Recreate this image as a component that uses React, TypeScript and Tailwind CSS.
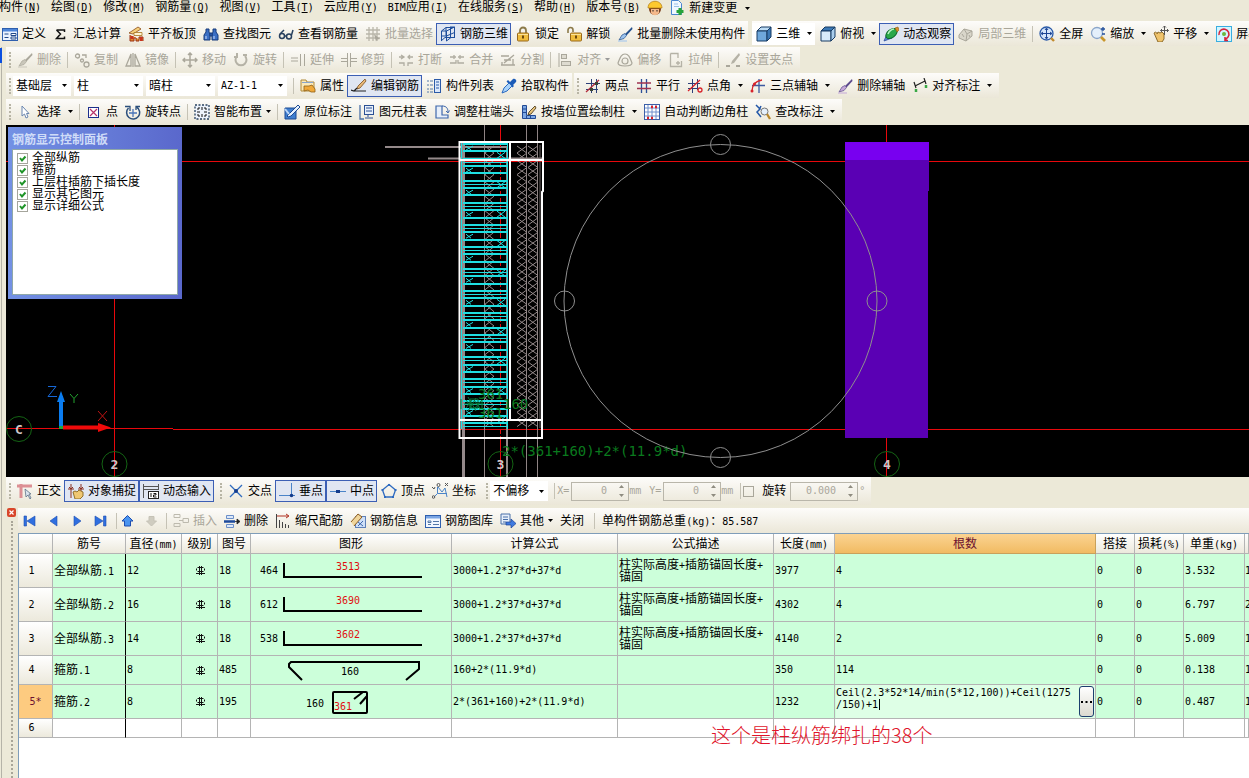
import { Fragment, useState } from "react";
import type { ReactNode } from "react";

const line = (d: string, color = "#27408b", w = 1.3) => (
  <path d={d} stroke={color} strokeWidth={w} fill="none" />
);

const brush = (handle: string, tip: string) => (
  <>
    <path d="M15 1 L8 8 l1.500 1.500 L15.500 3z" fill={handle} />
    <path d="M8 7.500 L5 9 L2 14 L7 12.500 L9.500 9.500z" fill={tip} stroke={handle} strokeWidth=".7" />
    <path d="M1 15h9" stroke={tip} />
  </>
);

const cube = (a: string, b: string, c: string) => (
  <g stroke="#173a63">
    <path d="M1 5 L5 1 H15 L11 5z" fill={a} />
    <path d="M1 5H11V15H1z" fill={b} />
    <path d="M11 5 L15 1 V11 L11 15z" fill={c} />
  </g>
);

const grid = (color: string) => line("M4 1V15M8 1V15M12 1V15M1 4H15M1 8H15M1 12H15", color);

// small 16x16 pictures used by the toolbars
const icons: Record<string, ReactNode> = {
  define: (
    <>
      <rect x=".5" y="2.500" width="15" height="12" fill="#eaf2ff" stroke="#2f5fae" />
      <path d="M1 3h14v2.500H1z" fill="#4f86d9" />
      <path d="M2.500 8h4M2.500 11.500h4M9 7.500h5v2H9zM9 11h5v2H9z" stroke="#234a8a" fill="#fff" />
    </>
  ),
  sum: <path d="M3.500 4H11.500V6M11.500 10.500V12.500H3.500L7.500 8L3.500 4" stroke="#111" strokeWidth="1.500" fill="none" />,
  slab: (
    <>
      <path d="M1 7L10 1L13 3L5 8z" fill="#f6cf7a" stroke="#8a4a16" strokeWidth=".8" />
      <path d="M6 6.500h8v3H6z" fill="#fff3cf" stroke="#a8741c" strokeWidth=".8" />
      <path d="M2 9v6h4v-3h2v3h3v-4h4v4" fill="#e08a2c" stroke="#9c3416" />
      <path d="M2.500 10h3v3h-3zM12 11h2.500v4H12z" fill="#c9331f" />
    </>
  ),
  find: (
    <g fill="#3b6fc4" stroke="#173a7a">
      <path d="M3 3h3v3l1 2v6H1V9l2-3z" />
      <path d="M10 3h3v3l2 3v5H9V8l1-2z" />
      <path d="M7 7h2v3H7z" />
      <path d="M3 10v3M11 10v3" stroke="#cfe0ff" />
    </g>
  ),
  glasses: (
    <g fill="none" stroke="#27405f" strokeWidth="1.500">
      <circle cx="4" cy="10" r="2.500" />
      <circle cx="11" cy="10.500" r="2.500" />
      <path d="M6.500 10h2M2 8L6 4M13.500 9L15 4" />
    </g>
  ),
  batch: (
    <>
      {grid("#b9b6aa")}
      <path d="M9 8l6 5-3 .5-1 2z" fill="#aaa79b" />
    </>
  ),
  frame: line("M1.500 5V15M6.500 5V15M10.500 1V12M14.500 1V12M1.500 5H6.500L14.500 1H10M1.500 10H6.500L14.500 6.500M1.500 5L6 1.500H14M6 1.500V10M1 15L5 11.500H14.500M6.500 15L11 11.500", "#1f4e9c", 1),
  lock: (
    <>
      <path d="M5 7V4.500a3 3 0 0 1 6 0V7" stroke="#8c7a4a" strokeWidth="1.800" fill="none" />
      <rect x="2.500" y="7" width="11" height="8" rx="1" fill="#f0bd3e" stroke="#98681a" />
      <path d="M3 8.500h10" stroke="#fbe39a" />
      <path d="M8 9.500v3" stroke="#5d3b08" strokeWidth="1.800" />
    </>
  ),
  unlock: (
    <>
      <path d="M2 7V4a2.500 2.500 0 0 1 5 0V6" stroke="#8c7a4a" strokeWidth="1.600" fill="none" />
      <rect x="4.500" y="7" width="11" height="8" rx="1" fill="#f0bd3e" stroke="#98681a" />
      <path d="M5 8.500h10" stroke="#fbe39a" />
      <path d="M10 9.500v3" stroke="#5d3b08" strokeWidth="1.800" />
    </>
  ),
  brush: brush("#234f8c", "#9cc3ee"),
  cube: cube("#bcdcf5", "#6fa8dc", "#3c78b4"),
  top: cube("#3c78b4", "#d8ebfa", "#a9cdec"),
  orbit: (
    <>
      <path d="M1 15L4 8l5 4z" fill="#5f88d0" stroke="#2b4f9c" strokeWidth=".8" />
      <ellipse cx="8.500" cy="7.500" rx="6.500" ry="4" transform="rotate(-38 8.500 7.500)" fill="#2ba84a" stroke="#0d6b2a" />
      <path d="M5 8c1-3 4-5 6-5" stroke="#b8f5c2" strokeWidth="1.500" fill="none" />
      <path d="M12 2l3-1 1 3-2 2z" fill="#d9902b" stroke="#8f5a14" strokeWidth=".6" />
    </>
  ),
  part: (
    <g fill="#d9d6ca" stroke="#aaa79b">
      <path d="M1 9L6 3l8 2v5l-6 5-7-3z" />
      <path d="M6 3l3 5M9 8l5-3M9 8l-1 7M4 8l2 3M11 9l1 2" />
    </g>
  ),
  full: (
    <>
      <circle cx="7.500" cy="7.500" r="6.500" fill="#d7e7fb" stroke="#2b5aa8" strokeWidth="1.300" />
      <path d="M7.500 2.500v10M2.500 7.500h10M6 4l1.500-2L9 4M6 11l1.500 2L9 11M4 6L2 7.500L4 9M11 6l2 1.500L11 9" stroke="#1c4494" fill="none" />
      <path d="M12 12l3 3" stroke="#c28a2b" strokeWidth="2.400" />
    </>
  ),
  zoom: (
    <>
      <circle cx="7" cy="7" r="5.500" fill="#e4effb" stroke="#8aa5c9" strokeWidth="1.300" />
      <path d="M11 11l4 4" stroke="#c9962b" strokeWidth="2.600" />
      <path d="M11 3h4M13 1v4M12 8h3" stroke="#234f9c" strokeWidth="1.300" />
    </>
  ),
  pan: (
    <>
      <path d="M1 7c2-2 3 0 3 1l1-2 2 1 2-1 2 2v5l-2 3H5z" fill="#efc36b" stroke="#8c6a2a" />
      <path d="M11.500 0v9M7.500 4.500h8M10 1.500L11.500 0L13 1.500M14 3l1.500 1.500L14 6M9 3L7.500 4.500L9 6" stroke="#555" fill="none" />
    </>
  ),
  screen: (
    <>
      <rect x=".5" y=".5" width="15" height="15" fill="#d2f5ff" stroke="#39aee0" />
      <path d="M3 9a5 5 0 1 1 9 2l-3 3M9 11v3.500h3" stroke="#d8233a" strokeWidth="1.600" fill="none" />
      <circle cx="8" cy="8" r="2" fill="#69b83c" />
    </>
  ),
  eraseG: brush("#aaa79b", "#c9c6ba"),
  copyG: (
    <g fill="none" stroke="#aaa79b" strokeWidth="1.300">
      <circle cx="3.500" cy="4" r="2" />
      <path d="M8 3h4v3" />
      <circle cx="12.500" cy="12.500" r="2.500" />
      <circle cx="8" cy="8.500" r="1.500" />
    </g>
  ),
  mirrorG: line("M6 2V14H1zM10 2V14H15zM8 1V15", "#aaa79b"),
  moveG: line("M8 1V15M1 8H15M6 3L8 1L10 3M6 13L8 15L10 13M3 6L1 8L3 10M13 6L15 8L13 10", "#aaa79b", 1.5),
  rotateG: line("M4 4a5.500 5.500 0 1 0 8 0M4 1v4H1M10 3h4", "#b5b2a6", 2),
  extendG: line("M1 6H8M1 9H8M10.500 2V14M14.500 2V14", "#aaa79b", 1),
  trimG: line("M0 6.500H6M10 6.500H16M0 9.500H6M10 9.500H16M6.500 1V15M9.500 1V15", "#aaa79b", 1),
  breakG: line("M1 5H6M10 5H15M1 11H6V14M10 14V11H15M3 3L6 5L3 7M12 3L10 5L12 7", "#b0ada1"),
  joinG: line("M1 5H7M9 5H15M1 11H7V8M9 8V11H15M5 3V7M11 3V7", "#b0ada1"),
  splitG: line("M1 4H9M1 13H15M2 10V13M13 7V13M4 11L14 3M4 8H11", "#aaa79b"),
  alignG: (
    <g fill="#dedbd0" stroke="#aaa79b">
      <path d="M2 1v14" />
      <rect x="4.500" y="2.500" width="5" height="4" />
      <rect x="4.500" y="9.500" width="9" height="4" />
    </g>
  ),
  offsetG: (
    <g fill="none" stroke="#aaa79b" strokeWidth="1.200">
      <path d="M8 2c4 0 5 4 7 9 0 2-3 3-7 3s-7-1-7-3c2-5 3-9 7-9z" />
      <circle cx="8" cy="9" r="3" />
    </g>
  ),
  stretchG: line("M2.500 1.500H10V6M2.500 1.500V14.500H13.500V9M8 11H12M10 9V13", "#b5b2a6"),
  gripG: (
    <>
      <path d="M14 1L7 9l-1 3 3-1 6-8z" fill="#b5b2a6" />
      <path d="M1 14h4M11 14h4" stroke="#aaa79b" strokeWidth="2" />
    </>
  ),
  props: (
    <>
      <path d="M1 2h5l1 2h7v9H1z" fill="#fbe9b8" stroke="#b08a3a" />
      <path d="M2 4.500h11" stroke="#8aa5c9" />
      <path d="M4 8h5l3-1 3 4v3h-4l-3-2-4 1z" fill="#f0a93a" stroke="#8f5f14" strokeWidth=".8" />
    </>
  ),
  pen: (
    <>
      <path d="M14 1L7 8l-1 3 3-1 6-7z" fill="#e8b878" stroke="#7b4f1e" strokeWidth=".8" />
      <path d="M0 12l3 1 3-3M3 13h12" stroke="#222" strokeWidth="1.200" fill="none" />
    </>
  ),
  list: (
    <>
      <path d="M1 3h2M4 3h3M1 7h2M4 7h3M1 11h2M4 11h3M1 14h2M4 14h3" stroke="#5578a8" />
      <rect x="8.500" y="1.500" width="6" height="13" fill="#dbe8fa" stroke="#2b5aa8" />
      <path d="M10 4h3M10 7h3M10 10h3" stroke="#2b5aa8" />
    </>
  ),
  pick: (
    <>
      <path d="M9 4L12 1c2-1 4 1 3 3l-3 3 1 1-1.500 1.500-6-6L7 2z" fill="#1c5cb8" />
      <path d="M8 5L3 10l-2 5 5-2 5-5z" fill="#a8d2fa" stroke="#2b6ac0" />
    </>
  ),
  twoPts: (
    <>
      {line("M6.500 1V15M11.500 1V15M1 5.500H15M1 11.500H13", "#2c3f78", 1)}
      <path d="M1 14L14 2" stroke="#b02b3a" strokeWidth="1.300" />
      <path d="M5 10h3v3H5zM10 4h3v3h-3z" fill="#3c4434" />
    </>
  ),
  parallel: (
    <>
      {line("M5.500 1V15M10.500 1V15", "#2c4f98")}
      {line("M1 5H15M1 10.500H15", "#a03350")}
    </>
  ),
  ptAngle: (
    <>
      {line("M5.500 1V15M10.500 1V12M1 5.500H13M1 10.500H10", "#2c3f78", 1)}
      <path d="M1 13L13 2" stroke="#d8232a" strokeWidth="1.300" />
      <circle cx="13" cy="12" r="2" fill="none" stroke="#d8232a" strokeWidth="1.300" />
    </>
  ),
  threePts: (
    <>
      {line("M9 1V15M2 7.500H15", "#3c5aa0")}
      <path d="M2 13c0-7 4-10 10-11" stroke="#d8232a" fill="none" strokeWidth="1.300" />
      <circle cx="2" cy="13" r="1.500" fill="#d8232a" />
      <circle cx="4.500" cy="6" r="1.500" fill="#d8232a" />
    </>
  ),
  delAxis: brush("#5c4a8c", "#c5a8d8"),
  dim: (
    <>
      <path d="M3 8L13 3M2 4l2 6M12 0l2 6" stroke="#222" strokeWidth="1.200" />
      <path d="M4 11v3M14 7v3" stroke="#39a845" strokeWidth="2.500" />
    </>
  ),
  cursor: <path d="M5 2V12L7.500 10L9 14L11 13L9.500 9.500H12z" fill="#fff" stroke="#6a86b0" />,
  point: (
    <>
      <rect x="2.500" y="3.500" width="10" height="10" fill="#fff" stroke="#1c2f8c" />
      <path d="M4 5l7 7M11 5l-7 7" stroke="#b8336a" strokeWidth="1.200" />
    </>
  ),
  rotPoint: (
    <>
      <path d="M3.500 4a6.500 6.500 0 1 0 8-1" stroke="#2b4f7c" strokeWidth="1.500" fill="none" />
      <path d="M0 2.500h5V7M11 6V2.500h4" stroke="#2b4f7c" strokeWidth="1.300" fill="none" />
      <path d="M8 5v8M4 9h8" stroke="#4a74b8" strokeWidth="1.300" />
    </>
  ),
  smart: (
    <>
      <rect x="1" y="1" width="14" height="14" fill="#edf3fc" stroke="#27405f" strokeDasharray="2 1.500" strokeWidth="1.300" />
      <path d="M4 6V4h2M10 4h2v2M12 10v2h-2M6 12H4v-2M8 3v3M8 10v3M3 8h3M10 8h3" stroke="#111" fill="none" />
    </>
  ),
  note: (
    <>
      <path d="M1 4h11v11H1z" fill="#3f7fd0" stroke="#1c4a94" />
      <path d="M3 12L14 1l2 2-9 9-3 1z" fill="#e4f0ff" stroke="#1c4a94" />
      <path d="M1 5l4 5" stroke="#bcd6f8" strokeWidth="2" />
    </>
  ),
  colTable: (
    <>
      <path d="M1 1v14h4" stroke="#4a70a8" fill="none" strokeWidth="1.300" />
      <rect x="5.500" y="1.500" width="9" height="9" fill="#e7effa" stroke="#2b4f94" />
      <path d="M7 4h6M7 7h6M9 11v2M6 14h8" stroke="#2b4f94" />
    </>
  ),
  adjust: (
    <>
      <path d="M2 2h6v9h6v3H2z" fill="#e7effa" stroke="#3f68ac" strokeWidth="1.200" />
      <path d="M8 2c5 0 6 3 6 6M12 7l2 2 1.500-2.500" stroke="#3f68ac" fill="none" />
    </>
  ),
  wallDraw: (
    <>
      <path d="M1.500 1.500h4v10h9v3h-13z" fill="#7da8e4" stroke="#234a94" />
      <path d="M2 5h3M2 8.500h3M5.500 12v2M9.500 12v2" stroke="#234a94" />
      <path d="M14 2L8 8l-1 3 3-1 5-6z" fill="#e8c47a" stroke="#3d2d12" strokeWidth=".8" />
    </>
  ),
  auto: (
    <>
      <rect x=".5" y=".5" width="15" height="15" fill="#fff" stroke="#3b5fa8" />
      {line("M4 1V15M8 1V15M12 1V15M1 4H15M1 8H15M1 12H15", "#6f90cc", 1)}
      <path d="M7 3h2M11 3h2M3 14h2M7 14h2" stroke="#d8232a" strokeWidth="2.500" />
    </>
  ),
  check: (
    <>
      <path d="M1 1l4 4-3 3 4 5M6 2L4 6" stroke="#2357a8" strokeWidth="1.500" fill="none" />
      <circle cx="9.500" cy="7.500" r="3.500" fill="#e4effb" stroke="#777" />
      <path d="M12 10l3 5" stroke="#b8862b" strokeWidth="2.300" />
    </>
  ),
  ortho: (
    <>
      <path d="M0 3h15M4 1v14" stroke="#dc8f94" strokeWidth="3" />
      <path d="M8 6l1 8 2-2 2 4 1-1-2-4h2z" fill="#dbe4ee" stroke="#5d7186" strokeWidth=".8" />
    </>
  ),
  snap: (
    <>
      <path d="M0 6h6M10 6h6M3 1v14M13 1v8M1 4l2 2 2-2M11 4l2 2 2-2" stroke="#8c3020" fill="none" />
      <path d="M5 9l2-1 2 1 2-2 4 2v4l-3 3H7z" fill="#f0c872" stroke="#91702c" />
    </>
  ),
  dyn: (
    <>
      <path d="M.5 1v14M15.500 1v6M1 3.500h14M1 6.500h14" stroke="#555" />
      <rect x="5.500" y="8.500" width="10" height="7" fill="#fff" stroke="#222" />
      <path d="M8 10v4M10.500 10.500h2.500v1.500h-2.500v2h3" stroke="#111" fill="none" />
    </>
  ),
  cross: (
    <>
      {line("M2 2L14 14M14 2L2 14", "#2f6bc0")}
      <circle cx="8" cy="8" r="2" fill="#143c8c" />
    </>
  ),
  perp: (
    <>
      {line("M12.500 0V12M0 12.500H16", "#4a84c8", 1)}
      <circle cx="12.500" cy="12.500" r="1.800" fill="#143c8c" />
    </>
  ),
  mid: (
    <>
      {line("M0 8.500H16", "#4a84c8", 1)}
      <path d="M6 7h4v3H6z" fill="#143c8c" />
    </>
  ),
  vertex: (
    <>
      {line("M8 1.500L14.500 7L12 14H4L1.500 7z", "#2f6bc0")}
      <path d="M7 1h2v2H7zM13.500 6h2v2h-2zM.5 6h2v2h-2zM3 13h2v2H3zM11 13h2v2h-2z" fill="#2f6bc0" />
    </>
  ),
  coord: (
    <>
      {line("M5.500 4V10.500H15M5.500 10.500L2 14M6 4L10 9L13 5L15 14", "#4a84c8", 1)}
      <path d="M0 4l2 2 1-2M13 0l3 3M16 0l-3 3" stroke="#555" fill="none" />
      <circle cx="6.500" cy="2" r="1.500" fill="none" stroke="#555" />
      <circle cx="1.500" cy="14" r="1.300" fill="none" stroke="#555" />
    </>
  ),
  insG: line("M1 1.500H7V4.500H1zM1 10.500H7V13.500H1zM6 7.500H10M10 5.500H15.500V9.500H10z", "#bdbaae", 1),
  rowDel: (
    <>
      <path d="M2.500 2.500h7v3h-7zM2.500 11.500h7v3h-7z" fill="#dce8fa" stroke="#6b8fc8" />
      <path d="M0 8.500h11" stroke="#1c4a9c" strokeWidth="2.500" />
      <path d="M11 8.500h2M13 6l3 2.500-3 2.500z" stroke="#222" strokeWidth=".8" fill="#222" />
    </>
  ),
  scale: (
    <>
      <path d="M2 3h11M11 1l3 2-3 2" stroke="#b03020" fill="none" />
      <path d="M1.500 1v14M4.500 7v8M7.500 9v6M10.500 11v4M13.500 12v3" stroke="#444" />
    </>
  ),
  info: (
    <>
      <rect x="5.500" y="3.500" width="10" height="11" fill="#cfe0f8" stroke="#5f80b8" />
      <path d="M1 9L8 1l4 3-8 9" fill="#f0d59a" stroke="#8a5a20" />
      <path d="M8 9l5 4M13 8l-5 5" stroke="#3f68ac" />
    </>
  ),
  lib: (
    <>
      <rect x=".5" y="2.500" width="15" height="12" fill="#f2f7ff" stroke="#2f5fae" />
      <path d="M1 3h14v2.500H1z" fill="#7aa5e4" />
      <path d="M3 8h3v1.500H3zM3 11.500h3M8 8.500h6M8 11.500h6" stroke="#5578a8" fill="none" />
    </>
  ),
  other: (
    <>
      <path d="M1 1h9v10H1zM3 4h5M3 6.500h5M3 9h3" fill="#e7effa" stroke="#4a70a8" />
      <path d="M6 9h5V6l5 4.500-5 4.500v-3H6z" fill="#3f7ae0" stroke="#1c4494" strokeWidth=".7" />
    </>
  ),
  first: <path d="M3 3h2.500v10H3zM14 3v10L6 8z" fill="#2f6fe0" stroke="#1c4db0" strokeWidth=".6" />,
  prev: <path d="M12 3v10L5 8z" fill="#2f6fe0" stroke="#1c4db0" strokeWidth=".6" />,
  next: <path d="M5 3v10L12 8z" fill="#2f6fe0" stroke="#1c4db0" strokeWidth=".6" />,
  last: <path d="M10.500 3H13v10h-2.500zM2 3v10l8-5z" fill="#2f6fe0" stroke="#1c4db0" strokeWidth=".6" />,
  up: <path d="M8.500 2.500L14 8H11.500v5h-6V8H3z" fill="#4a94f0" stroke="#1c4db0" />,
  down: <path d="M8.500 13L3.500 8H6V3.500h5V8h2.500z" fill="#cfccc0" stroke="#c5c2b6" />,
  worker: (
    <>
      <circle cx="8" cy="9" r="6" fill="#7a3f1c" />
      <path d="M4 9h8v4c-2 3-6 3-8 0z" fill="#f4b98a" />
      <path d="M1 8c0-9 14-9 14 0z" fill="#fdc92e" stroke="#b07a12" strokeWidth=".7" />
      <path d="M6 10v1.500M10 10v1.500" stroke="#222" />
    </>
  ),
  newDoc: (
    <>
      <path d="M2.500.5h7l3 3v11h-10z" fill="#f0f7ff" stroke="#4a86d0" />
      <path d="M5 4h4M5 6.500h5" stroke="#9cc0e8" />
      <path d="M11 8v7M7.500 11.500h7" stroke="#27a33a" strokeWidth="3" />
    </>
  ),
};

function Icon({ name }: { name: string }) {
  return (
    <svg viewBox="0 0 16 16" className="size-4 shrink-0" aria-hidden="true">
      {icons[name]}
    </svg>
  );
}

// Latin runs are half as wide as the Chinese characters beside them
function Mixed({ text }: { text: string }) {
  return (
    <>
      {text.split(/([\x20-\x7e]+)/).map((part, i) =>
        i % 2 ? (
          <span key={i} className="text-[10px] leading-none">{part}</span>
        ) : (
          <Fragment key={i}>{part}</Fragment>
        )
      )}
    </>
  );
}

function Arrow({ muted = false }: { muted?: boolean }) {
  return (
    <svg viewBox="0 0 5 3" className="h-[3px] w-[5px] shrink-0" aria-hidden="true">
      <path d="M0 0H5L2.500 3z" fill={muted ? "#999" : "#000"} />
    </svg>
  );
}

const Sep = () => <span className="ml-[3px] mr-[2px] h-4 w-px shrink-0 bg-[#c5c2b5]" />;
const Grip = () => <span className="ml-[3px] mr-[2px] h-4 w-[2px] shrink-0 border-l-2 border-dotted border-[#b8b5a5]" />;

type ToolProps = { icon?: string; label: string; on?: boolean; off?: boolean; menu?: boolean; tight?: boolean };

function Tool({ icon, label, on, off, menu, tight }: ToolProps) {
  return (
    <button
      type="button"
      disabled={off}
      aria-pressed={on}
      className={`flex h-[22px] shrink-0 items-center gap-1 border pl-[3px] pr-[2px] ${
        on ? "border-[#3c5fb4] bg-[#e0e6f2]" : "border-transparent hover:border-[#9db2d8]"
      } ${off ? "text-[#a9a69a]" : "text-black"}`}
    >
      {icon && <Icon name={icon} />}
      <span>{label}</span>
      {menu && (
        <span className={tight ? "flex" : "flex w-2 justify-end"}>
          <Arrow muted={off} />
        </span>
      )}
    </button>
  );
}

function Bar({ children, className = "" }: { children: ReactNode; className?: string }) {
  return (
    <div className={`flex h-[25px] shrink-0 items-center bg-linear-to-b from-[#fdfcfa] to-[#ebe7d8] ${className}`}>
      {children}
    </div>
  );
}

function Combo({ label, options, width }: { label: string; options: string[]; width: string }) {
  return (
    <span className={`relative mr-[3px] flex h-5 shrink-0 items-center bg-white ${width}`}>
      <select aria-label={label} className="w-full appearance-none bg-transparent pl-[3px] outline-none">
        {options.map((o) => (
          <option key={o}>{o}</option>
        ))}
      </select>
      <span className="pointer-events-none absolute right-1 flex">
        <Arrow />
      </span>
    </span>
  );
}

function Spin({ label, value, width }: { label: string; value: string; width: string }) {
  return (
    <span className={`flex h-[19px] shrink-0 items-center border border-[#b9b6aa] pr-1 ${width}`}>
      <input aria-label={label} defaultValue={value} disabled className="min-w-0 flex-1 pr-3 text-right text-[10px] text-[#a9a69a]" />
      <svg viewBox="0 0 5 12" className="h-3 w-[5px] shrink-0" aria-hidden="true">
        <path d="M0 3L2.500 0L5 3zM0 9H5L2.500 12z" fill="#8f8c80" />
      </svg>
    </span>
  );
}

const menus = [
  ["构件", "N"], ["绘图", "D"], ["修改", "M"], ["钢筋量", "Q"], ["视图", "V"], ["工具", "T"],
  ["云应用", "Y"], ["BIM应用", "I"], ["在线服务", "S"], ["帮助", "H"], ["版本号", "B"],
];

function MenuBar() {
  return (
    <nav className="-ml-px flex h-5 items-start gap-[10px] overflow-hidden leading-[14px]">
      {menus.map(([name, key]) => (
        <button key={key} type="button" className="shrink-0">
          <Mixed text={name} />
          <span className="text-[10px]">
            (<u>{key}</u>)
          </span>
        </button>
      ))}
      <span className="-ml-[3px] flex shrink-0">
        <Icon name="worker" />
      </span>
      <button type="button" className="-ml-1 flex shrink-0 items-center gap-1">
        <Icon name="newDoc" />
        新建变更
        <span className="ml-1">
          <Arrow />
        </span>
      </button>
    </nav>
  );
}

function Toolbars() {
  return (
    <div className="flex flex-col items-start gap-px pb-px">
      <div className="flex w-full overflow-hidden">
        <Bar className="-ml-[2px]">
          <Tool icon="define" label="定义" />
          <Tool icon="sum" label="汇总计算" />
          <Tool icon="slab" label="平齐板顶" />
          <Tool icon="find" label="查找图元" />
          <Tool icon="glasses" label="查看钢筋量" />
          <Tool icon="batch" label="批量选择" off />
          <Tool icon="frame" label="钢筋三维" on />
          <Tool icon="lock" label="锁定" />
          <Tool icon="unlock" label="解锁" />
          <Tool icon="brush" label="批量删除未使用构件" />
        </Bar>
        <Bar className="ml-1 flex-1">
          <span className="mr-px flex shrink-0 bg-white">
            <Tool icon="cube" label="三维" menu />
          </span>
          <Tool icon="top" label="俯视" menu />
          <Tool icon="orbit" label="动态观察" on />
          <Tool icon="part" label="局部三维" off />
          <Sep />
          <Tool icon="full" label="全屏" />
          <Tool icon="zoom" label="缩放" menu />
          <Tool icon="pan" label="平移" menu />
          <Tool icon="screen" label="屏幕旋转" />
        </Bar>
      </div>
      <Bar className="ml-[6px] pr-1">
        <Grip />
        <Tool icon="eraseG" label="删除" off />
        <Sep />
        <Tool icon="copyG" label="复制" off />
        <Tool icon="mirrorG" label="镜像" off />
        <Sep />
        <Tool icon="moveG" label="移动" off />
        <Tool icon="rotateG" label="旋转" off />
        <Sep />
        <Tool icon="extendG" label="延伸" off />
        <Tool icon="trimG" label="修剪" off />
        <Sep />
        <Tool icon="breakG" label="打断" off />
        <Tool icon="joinG" label="合并" off />
        <Tool icon="splitG" label="分割" off />
        <Sep />
        <Tool icon="alignG" label="对齐" off menu tight />
        <Tool icon="offsetG" label="偏移" off />
        <Tool icon="stretchG" label="拉伸" off />
        <Sep />
        <Tool icon="gripG" label="设置夹点" off />
      </Bar>
      <div className="ml-[6px] flex">
        <Bar>
          <Grip />
          <Combo label="楼层" options={["基础层", "首层"]} width="w-[58px]" />
          <Combo label="构件类型" options={["柱", "梁"]} width="w-[69px]" />
          <Combo label="柱类型" options={["暗柱", "框柱"]} width="w-[69px]" />
          <span className="text-[10px]">
            <Combo label="构件名称" options={["AZ-1-1"]} width="w-[69px]" />
          </span>
          <Sep />
          <Tool icon="props" label="属性" />
          <Tool icon="pen" label="编辑钢筋" on />
          <Tool icon="list" label="构件列表" />
          <Tool icon="pick" label="拾取构件" />
        </Bar>
        <Bar className="ml-[2px] pr-1">
          <Grip />
          <Tool icon="twoPts" label="两点" />
          <Tool icon="parallel" label="平行" />
          <Tool icon="ptAngle" label="点角" menu />
          <Tool icon="threePts" label="三点辅轴" menu />
          <Tool icon="delAxis" label="删除辅轴" />
          <Tool icon="dim" label="对齐标注" menu />
        </Bar>
      </div>
      <Bar className="ml-[6px] pr-1">
        <Grip />
        <Tool icon="cursor" label="选择" menu />
        <Sep />
        <Tool icon="point" label="点" />
        <Tool icon="rotPoint" label="旋转点" />
        <Sep />
        <Tool icon="smart" label="智能布置" menu tight />
        <Sep />
        <Tool icon="note" label="原位标注" />
        <Tool icon="colTable" label="图元柱表" />
        <Tool icon="adjust" label="调整柱端头" />
        <Tool icon="wallDraw" label="按墙位置绘制柱" menu />
        <Tool icon="auto" label="自动判断边角柱" />
        <Tool icon="check" label="查改标注" menu />
      </Bar>
    </div>
  );
}

// stirrups and tie hatching of the column in the 3D view
const stirrups = Array.from({ length: 39 }, (_, i) => 144 + i * 7.35);
const ties = Array.from({ length: 39 }, (_, i) => 146 + i * 7.2);

function Bubble({ x, y, text }: { x: number; y: number; text: string }) {
  return (
    <g>
      <circle cx={x} cy={y} r="12.5" fill="none" stroke="#146414" />
      <text x={x} y={y + 5} textAnchor="middle" fontSize="13" fontWeight="bold" fill="#cfc5c8">{text}</text>
    </g>
  );
}

function ModelView() {
  return (
    <svg className="block h-[352px] w-full bg-black" role="img" aria-label="钢筋三维">
      <g fill="#e8080c">
        <rect x="0" y="36" width="100%" height="1" />
        <rect x="0" y="303" width="167" height="1" />
        <rect x="167" y="304" width="100%" height="1" />
        <rect x="108" y="0" width="1" height="100%" />
        <rect x="494" y="0" width="1" height="100%" />
        <rect x="880" y="0" width="1" height="100%" />
      </g>
      <g transform="translate(-6 -125)" fill="none">
        <path d="M460 142H543V438H460z" fill="#000" />
        <path d="M460 161.500H543M460 429.500H543" stroke="#e8080c" />
        <path d="M484.500 125V477M526.500 125V477M537.500 125V477" stroke="#8f8484" />
        <path d="M463.500 142V477" stroke="#94898a" strokeWidth="3" />
        <path d="M507 146V477" stroke="#94898a" strokeWidth="2" />
        <path d="M385 147H507M428 158.500H543" stroke="#94898a" strokeWidth="2" />
        <path d="M540 145V428" stroke="#6d6464" />
        {ties.map((y) => (
          <path
            key={y}
            d={`M517 ${y}l10 7.200M517 ${y + 7}l10 -7.200M528 ${y}l10 7.200M528 ${y + 7}l10 -7.200M485 ${y}l9 7.200M485 ${y + 7}l9 -7.200`}
            stroke="#94898a"
          />
        ))}
        <path d="M500.500 142V438" stroke="#e8080c" strokeDasharray="5 2" />
        {stirrups.map((y, i) => (
          <g key={y} stroke="#1fdfe2">
            <path d={`M463 ${Math.round(y)}H508`} strokeWidth={2} />
            {i % 3 === 2 && <path d={`M463 ${Math.round(y) + 3.5}H508`} />}
            {i % 3 === 0 && <path d={`M466 ${y + 6}l7 -4M466 ${y + 2}l5 4`} />}
            {i % 4 === 1 && <path d={`M497 ${y + 1}l8 6M497 ${y + 7}l8 -6`} />}
          </g>
        ))}
        <path d="M461.500 143V429M507.500 143V429" stroke="#1fdfe2" />
        <path d="M459.500 142H543V191L542 192V438H459.500zM510 142V420M459 160H543M459 420H543" stroke="#fff" strokeWidth="2" />

        <path
          d="M461 399v10M466 400l6 8M466 408l6-8M470 399h8v9h-8zM474 400l6 8M474 409l8-9M464 404h20M468 397l8 14M476 398l-8 13M482 400v9"
          stroke="#0a7a3a"
        />
        <g fill="#0a7a1e" fontSize="14">
          <text x="478" y="399">361</text>
          <text x="478" y="418">361</text>
          <text x="503" y="409">160</text>
          <text x="502" y="456">2*(361+160)+2*(11.9*d)</text>
        </g>

        <path d="M845 142H929V191H928V438H845z" fill="#5a00b4" />
        <path d="M845 142H929V160H845z" fill="#7800f0" />
        <g stroke="#8f8f8f">
          <circle cx="720.500" cy="301" r="156.500" />
          <circle cx="720.500" cy="144.500" r="10" />
          <circle cx="720.500" cy="457.500" r="10" />
          <circle cx="564.500" cy="301" r="10" />
          <circle cx="877" cy="301" r="10" />
        </g>

        <Bubble x={19} y={429} text="C" />
        <Bubble x={114.5} y={464} text="2" />
        <Bubble x={500.5} y={464} text="3" />
        <Bubble x={887} y={464} text="4" />

        <path d="M61 427V396" stroke="#0a7cf0" strokeWidth="4" />
        <path d="M61 391L65 402H57z" fill="#0a7cf0" />
        <path d="M63 427.500H100" stroke="#f00a0a" strokeWidth="4" />
        <path d="M98 423L111 427.500L98 432z" fill="#f00a0a" />
        <path d="M59 426h4v3h-4z" fill="#1fa83a" />
        <path d="M48 386.500H56L48 396.500H57" stroke="#1668d8" />
        <path d="M70 394L74 398.500L78 394M74 398.500V403" stroke="#23a32f" />
        <path d="M98 411L107 421M107 411L98 421" stroke="#c01414" />
      </g>
    </svg>
  );
}

const displayOptions = ["全部纵筋", "箍筋", "上层柱插筋下插长度", "显示其它图元", "显示详细公式"];

function DisplayPanel() {
  return (
    <section className="absolute left-[2px] top-[2px] flex h-[172px] w-[174px] flex-col bg-linear-to-r from-[#7391e4] to-[#5a68cc] px-1 pb-1">
      <h2 className="h-[22px] pt-[6px] text-[12px] font-bold leading-[14px] text-[#cfdcf8]">钢筋显示控制面板</h2>
      <div className="flex-1 border border-[#8fa8a8] bg-white pl-1 pt-[2px]">
        {displayOptions.map((name) => (
          <label key={name} className="flex h-3 items-center gap-1 leading-3">
            <span className="relative flex size-[11px] shrink-0">
              <input type="checkbox" defaultChecked className="peer size-[11px] appearance-none border border-[#a5a59c] bg-white" />
              <svg viewBox="0 0 11 11" className="pointer-events-none absolute inset-0 hidden peer-checked:block" aria-hidden="true">
                <path d="M3 5L5 7.500L8.500 3.500" stroke="#1f9428" strokeWidth="2" fill="none" />
              </svg>
            </span>
            {name}
          </label>
        ))}
      </div>
    </section>
  );
}

function SnapBar() {
  return (
    <Bar className="h-[28px] w-[865px]">
      <Grip />
      <Tool icon="ortho" label="正交" />
      <Tool icon="snap" label="对象捕捉" on />
      <Tool icon="dyn" label="动态输入" on />
      <span className="ml-[3px] flex">
        <Grip />
      </span>
      <Tool icon="cross" label="交点" />
      <Tool icon="perp" label="垂点" on />
      <Tool icon="mid" label="中点" on />
      <Tool icon="vertex" label="顶点" />
      <Tool icon="coord" label="坐标" />
      <span className="ml-1 flex">
        <Grip />
      </span>
      <Combo label="偏移方式" options={["不偏移", "正交"]} width="w-[58px]" />
      <Sep />
      <span className="w-[14px] text-[10px] text-[#a9a69a]">X=</span>
      <Spin label="X" value="0" width="w-[58px]" />
      <span className="w-5 text-[10px] text-[#a9a69a]">mm</span>
      <span className="w-[14px] text-[10px] text-[#a9a69a]">Y=</span>
      <Spin label="Y" value="0" width="w-[58px]" />
      <span className="w-4 text-[10px] text-[#a9a69a]">mm</span>
      <Sep />
      <label className="flex shrink-0 items-center gap-2 pr-1">
        <input type="checkbox" className="size-[11px] appearance-none border border-[#a9a69a] checked:bg-[#3c5fb4]" />
        旋转
      </label>
      <Spin label="旋转角度" value="0.000" width="w-[68px]" />
      <span className="pl-px text-[10px] text-[#a9a69a]">°</span>
    </Bar>
  );
}

function NavButton({ icon, label, disabled, gap = "mr-2" }: { icon: string; label: string; disabled?: boolean; gap?: string }) {
  return (
    <button type="button" aria-label={label} disabled={disabled} className={`shrink-0 ${gap}`}>
      <Icon name={icon} />
    </button>
  );
}

function TableTools() {
  return (
    <Bar className="pl-[3px]">
      <NavButton icon="first" label="第一条" />
      <NavButton icon="prev" label="上一条" />
      <NavButton icon="next" label="下一条" />
      <NavButton icon="last" label="最后一条" gap="mr-1" />
      <Sep />
      <NavButton icon="up" label="上移" />
      <NavButton icon="down" label="下移" disabled gap="mr-1" />
      <Sep />
      <Tool icon="insG" label="插入" off />
      <Tool icon="rowDel" label="删除" />
      <Tool icon="scale" label="缩尺配筋" />
      <Tool icon="info" label="钢筋信息" />
      <Tool icon="lib" label="钢筋图库" />
      <Tool icon="other" label="其他" menu tight />
      <Tool label="关闭" />
      <span className="ml-1 flex">
        <Sep />
      </span>
      <span className="shrink-0 pl-[5px]">
        <Mixed text="单构件钢筋总重(kg)：85.587" />
      </span>
    </Bar>
  );
}

function RebarMark() {
  return (
    <svg viewBox="0 0 11 11" className="mx-auto size-[11px]" role="img" aria-label="HRB400">
      <path d="M4.500 1V10M6.500 1V10M1 8.500H10M2.500 2.500H8.500M1.500 3.500V5.500M2.500 6.500H8.500M9.500 3.500V5.500" stroke="#111" fill="none" />
    </svg>
  );
}

function LShape({ hook, length }: { hook: string; length: string }) {
  return (
    <svg viewBox="0 0 200 33" className="block h-[33px] w-[200px]" fontSize="10">
      <text x="9" y="20">{hook}</text>
      <path d="M33 9V23H171" stroke="#000" strokeWidth="2" fill="none" />
      <text x="85" y="16" fill="#e01010">{length}</text>
    </svg>
  );
}

function OpenStirrup() {
  return (
    <svg viewBox="0 0 200 28" className="block h-[28px] w-[200px]" fontSize="10">
      <path d="M51 24L38 11V8L40 6H168V13L155 24" stroke="#000" strokeWidth="2" fill="none" />
      <text x="90" y="19">160</text>
    </svg>
  );
}

function ClosedStirrup() {
  return (
    <svg viewBox="0 0 200 33" className="block h-[33px] w-[200px]" fontSize="10">
      <text x="55" y="22">160</text>
      <rect x="82" y="7" width="34" height="21" rx="1" stroke="#000" strokeWidth="2" fill="none" />
      <path d="M103 14L112 7M109 19L116 11" stroke="#000" strokeWidth="2" />
      <text x="83" y="25" fill="#e01010">361</text>
    </svg>
  );
}

const columns = [
  { name: "", width: "w-[34px]" },
  { name: "筋号", width: "w-[73px]" },
  { name: "直径(mm)", width: "w-[56px]" },
  { name: "级别", width: "w-[36px]" },
  { name: "图号", width: "w-[33px]" },
  { name: "图形", width: "w-[201px]" },
  { name: "计算公式", width: "w-[166px]" },
  { name: "公式描述", width: "w-[156px]" },
  { name: "长度(mm)", width: "w-[61px]" },
  { name: "根数", width: "w-[261px]" },
  { name: "搭接", width: "w-[39px]" },
  { name: "损耗(%)", width: "w-[49px]" },
  { name: "单重(kg)", width: "w-[61px]" },
  { name: "", width: "" },
];

const anchorText = "柱实际高度+插筋锚固长度+锚固";
const formula = "3000+1.2*37*d+37*d";

const rows = [
  { name: "全部纵筋.1", dia: "12", no: "18", shape: <LShape hook="464" length="3513" />, calc: formula, desc: anchorText, len: "3977", count: "4", unit: "3.532", total: "1", height: "h-[34px]" },
  { name: "全部纵筋.2", dia: "16", no: "18", shape: <LShape hook="612" length="3690" />, calc: formula, desc: anchorText, len: "4302", count: "4", unit: "6.797", total: "2", height: "h-[34px]" },
  { name: "全部纵筋.3", dia: "14", no: "18", shape: <LShape hook="538" length="3602" />, calc: formula, desc: anchorText, len: "4140", count: "2", unit: "5.009", total: "1", height: "h-[34px]" },
  { name: "箍筋.1", dia: "8", no: "485", shape: <OpenStirrup />, calc: "160+2*(11.9*d)", desc: "", len: "350", count: "114", unit: "0.138", total: "1", height: "h-[29px]" },
  { name: "箍筋.2", dia: "8", no: "195", shape: <ClosedStirrup />, calc: "2*(361+160)+2*(11.9*d)", desc: "", len: "1232", count: "", unit: "0.487", total: "1", height: "h-[34px]" },
];

const cell = "border-b border-r border-[#b4b4b4] pl-px";
const head = "border-b border-r border-[#b4b4b4] bg-linear-to-b from-white to-[#ece9dc] font-normal";

function CountEditor() {
  const [value, setValue] = useState("Ceil(2.3*52*14/min(5*12,100))+Ceil(1275/150)+1");
  return (
    <div className="relative flex h-[33px] items-start bg-[#deffe6]">
      <textarea
        aria-label="根数"
        value={value}
        onChange={(e) => setValue(e.target.value)}
        className="block h-[33px] w-[239px] resize-none overflow-hidden break-all pt-[2px] text-[10px] leading-3 outline-none [line-break:anywhere]"
      />
      <span className="absolute left-[43px] top-[14px] h-[11px] w-px bg-black" />
      <button type="button" aria-label="编辑公式" className="absolute bottom-px right-px top-px w-[15px] rounded-[3px] border border-[#1c3f6e] bg-linear-to-b from-white to-[#dcdad0]">
        <svg viewBox="0 0 11 2" className="mx-auto h-[2px] w-[11px]" aria-hidden="true">
          <path d="M0 0h2v2H0zM4.500 0h2v2h-2zM9 0h2v2H9z" />
        </svg>
      </button>
    </div>
  );
}

function RebarTable() {
  return (
    <div className="relative flex-1 overflow-hidden border-l border-t border-[#7f9db9] bg-white">
      <table className="w-full table-fixed border-separate border-spacing-0">
        <colgroup>
          {columns.map((c, i) => (
            <col key={i} className={c.width} />
          ))}
        </colgroup>
        <thead>
          <tr className="h-5">
            {columns.map((c, i) => (
              <th
                key={i}
                className={c.name === "根数" ? "border-b border-r border-[#c9a15a] bg-linear-to-b from-[#fbd391] to-[#f1bb62] font-normal text-[#6b1030]" : head}
              >
                <span className="flex justify-center whitespace-nowrap pt-[2px] leading-[17px]">
                  <span>
                    <Mixed text={c.name} />
                  </span>
                </span>
              </th>
            ))}
          </tr>
        </thead>
        <tbody>
          {rows.map((r, i) => (
            <tr key={r.name} className={`bg-[#ccffda] ${r.height}`}>
              <th className={i === 4 ? "border-b border-r border-[#b4b4b4] bg-[#fdcb80] text-[10px] font-normal text-[#6b1030]" : `${head} pr-2 text-[10px]`}>
                {i === 4 ? "5*" : i + 1}
              </th>
              <td className="whitespace-nowrap border-b border-r border-b-[#b4b4b4] border-r-black pl-px">
                <Mixed text={r.name} />
              </td>
              <td className={`${cell} text-[10px]`}>{r.dia}</td>
              <td className={cell}>
                <RebarMark />
              </td>
              <td className={`${cell} text-[10px]`}>{r.no}</td>
              <td className="border-b border-r border-[#b4b4b4]">{r.shape}</td>
              <td className={`${cell} text-[10px]`}>{r.calc}</td>
              <td className={`${cell} leading-3 [line-break:anywhere]`}>
                <Mixed text={r.desc} />
              </td>
              <td className={`${cell} text-[10px]`}>{r.len}</td>
              <td className={i === 4 ? "border-b border-r border-[#b4b4b4] pl-px" : `${cell} text-[10px]`}>
                {i === 4 ? <CountEditor /> : r.count}
              </td>
              <td className={`${cell} text-[10px]`}>0</td>
              <td className={`${cell} text-[10px]`}>0</td>
              <td className={`${cell} text-[10px]`}>{r.unit}</td>
              <td className="overflow-hidden border-b border-[#b4b4b4] text-[10px]">{r.total}</td>
            </tr>
          ))}
          <tr className="h-[19px]">
            <th className={`${head} pr-2 text-[10px]`}>6</th>
            <td className="border-b border-r border-b-[#b4b4b4] border-r-black" />
            {columns.slice(2).map((_, i) => (
              <td key={i} className={cell} />
            ))}
          </tr>
        </tbody>
      </table>
      <p className="absolute left-[692px] top-[189px] whitespace-nowrap font-['Noto_Sans_CJK_SC',sans-serif] text-[20px] font-light leading-6 text-[#e0142a]">
        这个是柱纵筋绑扎的38个
      </p>
    </div>
  );
}

export default function App() {
  return (
    <div className="relative flex min-h-screen flex-col overflow-hidden bg-[#ece9d8] font-['DejaVu_Sans_Mono','Noto_Sans_CJK_SC',monospace] text-[12px] leading-4 text-black">
      <MenuBar />
      <div className="pt-px">
        <Toolbars />
      </div>
      <span className="absolute bottom-0 left-px top-[47px] w-px bg-[#b5b3a8]" />
      <span className="absolute left-0 top-[48px] h-[15px] w-[2px] bg-[#0a4fe0]" />
      <main className="relative ml-[6px]">
        <ModelView />
        <DisplayPanel />
        <SnapBar />
      </main>
      <div className="flex flex-1 pt-[3px]">
        <div className="flex w-[18px] shrink-0 flex-col items-end pr-[2px]">
          <button type="button" aria-label="关闭面板" className="size-[9px] rounded-[2px] bg-[#d8462a]">
            <svg viewBox="0 0 9 9" className="size-[9px]" aria-hidden="true">
              <path d="M2.500 2.500l4 4M6.500 2.500l-4 4" stroke="#fff" strokeWidth="1.200" />
            </svg>
          </button>
          <span className="mr-[3px] mt-1 flex-1 border-l-2 border-dotted border-[#a8a598]" />
        </div>
        <div className="flex min-w-0 flex-1 flex-col">
          <TableTools />
          <RebarTable />
        </div>
      </div>
    </div>
  );
}
